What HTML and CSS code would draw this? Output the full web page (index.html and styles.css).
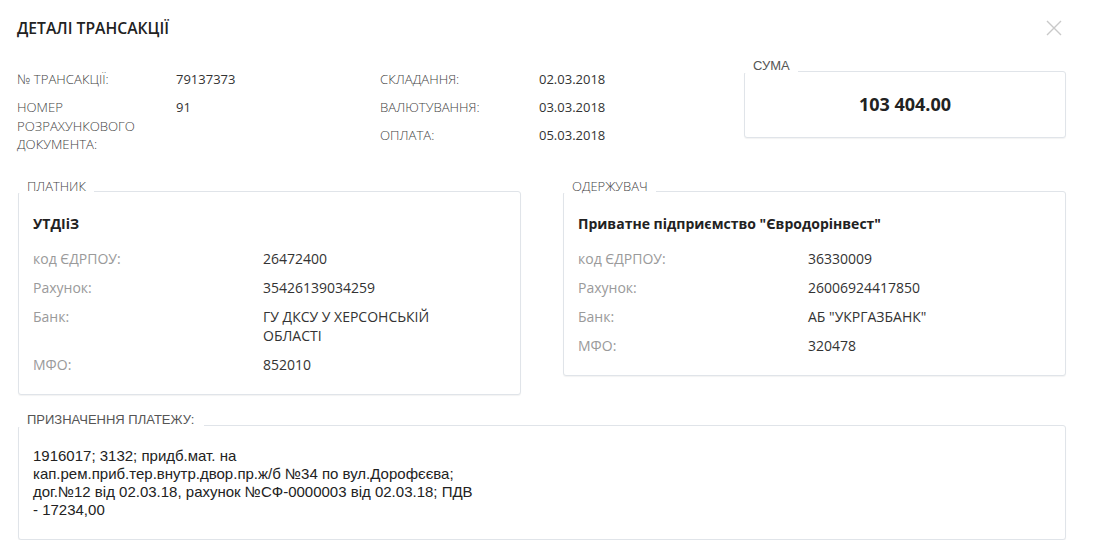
FILE: index.html
```html
<!DOCTYPE html>
<html lang="uk">
<head>
<meta charset="utf-8">
<title>Деталі трансакції</title>
<link rel="stylesheet" href="styles.css">
</head>
<body>
<div class="page">
  <header class="header">
    <h1 class="title">ДЕТАЛІ ТРАНСАКЦІЇ</h1>
    <button class="close" aria-label="Закрити">
      <svg width="16" height="16" viewBox="0 0 16 16"><path d="M1 1 L15 15 M15 1 L1 15" stroke="#c9c9c9" stroke-width="1.4" fill="none"/></svg>
    </button>
  </header>

  <section class="top">
    <div class="info">
      <div class="lbl">№ ТРАНСАКЦІЇ:</div><div class="val">79137373</div>
      <div class="lbl">НОМЕР<br>РОЗРАХУНКОВОГО<br>ДОКУМЕНТА:</div><div class="val">91</div>
    </div>
    <div class="info">
      <div class="lbl">СКЛАДАННЯ:</div><div class="val">02.03.2018</div>
      <div class="lbl">ВАЛЮТУВАННЯ:</div><div class="val">03.03.2018</div>
      <div class="lbl">ОПЛАТА:</div><div class="val">05.03.2018</div>
    </div>
    <div class="fs">
      <div class="legend legend-arial">СУМА</div>
      <div class="box sum-box">103 404.00</div>
    </div>
  </section>

  <section class="parties">
    <div class="fs">
      <div class="legend">ПЛАТНИК</div>
      <div class="box party">
        <div class="party-name">УТДІіЗ</div>
        <div class="rows">
          <div class="plbl">код ЄДРПОУ:</div><div class="pval">26472400</div>
          <div class="plbl">Рахунок:</div><div class="pval">35426139034259</div>
          <div class="plbl">Банк:</div><div class="pval">ГУ ДКСУ У ХЕРСОНСЬКІЙ ОБЛАСТІ</div>
          <div class="plbl">МФО:</div><div class="pval">852010</div>
        </div>
      </div>
    </div>
    <div class="fs">
      <div class="legend">ОДЕРЖУВАЧ</div>
      <div class="box party">
        <div class="party-name">Приватне підприємство "Євродорінвест"</div>
        <div class="rows">
          <div class="plbl">код ЄДРПОУ:</div><div class="pval">36330009</div>
          <div class="plbl">Рахунок:</div><div class="pval">26006924417850</div>
          <div class="plbl">Банк:</div><div class="pval">АБ "УКРГАЗБАНК"</div>
          <div class="plbl">МФО:</div><div class="pval">320478</div>
        </div>
      </div>
    </div>
  </section>

  <section class="fs purpose">
    <div class="legend legend-arial legend-wide">ПРИЗНАЧЕННЯ ПЛАТЕЖУ:</div>
    <div class="box purpose-box">
      <p class="purpose-text">1916017; 3132; придб.мат. на<br>кап.рем.приб.тер.внутр.двор.пр.ж/б №34 по вул.Дорофєєва;<br>дог.№12 від 02.03.18, рахунок №СФ-0000003 від 02.03.18; ПДВ<br>- 17234,00</p>
    </div>
  </section>
</div>
</body>
</html>
```

FILE: styles.css
```css
* { box-sizing: border-box; }
html, body { margin: 0; padding: 0; background: #fff; }
body {
  font-family: "Open Sans", "Noto Sans", sans-serif;
  color: #333;
}
.page {
  padding: 17px 27px 0 17px;
}
.header {
  display: flex;
  justify-content: space-between;
  align-items: center;
  height: 22px;
}
.title {
  margin: 0;
  font-size: 15.7px;
  line-height: 22px;
  font-weight: 600;
  color: #222;
}
.close {
  border: 0;
  background: none;
  padding: 0;
  margin: 0 4px 0 0;
  width: 16px;
  height: 16px;
  display: flex;
}

.top {
  display: grid;
  grid-template-columns: 363px 364px 1fr;
  margin-top: 20px;
}
.info {
  display: grid;
  grid-template-columns: 159px 1fr;
  row-gap: 9px;
  align-content: start;
  padding-top: 11px;
  line-height: 19px;
}
.lbl {
  font-size: 13.2px;
  line-height: 18.5px;
  font-weight: 300;
  color: #444;
}
.val {
  font-size: 13px;
  color: #333;
}

.fs { display: flex; flex-direction: column; align-items: flex-start; }
.legend {
  position: relative;
  z-index: 1;
  background: #fff;
  padding: 0 8px 0 9px;
  font-size: 13px;
  font-weight: 300;
  line-height: 14px;
  color: #444;
}
.legend-arial {
  font-family: "Liberation Sans", Arial, sans-serif;
  font-weight: 400;
  font-size: 13px;
  color: #555;
}
.legend-wide { padding-right: 10px; }
.box {
  align-self: stretch;
  margin-top: -2px;
  border: 1px solid #e0e4e9;
  border-radius: 3px;
  box-shadow: 0 1px 1px rgba(0, 0, 0, 0.05);
  background: #fff;
}
.sum-box {
  height: 67px;
  line-height: 65px;
  text-align: center;
  font-size: 18px;
  font-weight: 700;
  color: #222;
}

.parties {
  display: grid;
  grid-template-columns: 503px 503px;
  justify-content: space-between;
  align-items: start;
  margin: 25px 0 0 1px;
}
.party {
  padding: 22px 14px 20px 14px;
}
.party-name {
  font-size: 14px;
  font-weight: 700;
  line-height: 19px;
  color: #222;
}
.rows {
  display: grid;
  grid-template-columns: 230px 200px;
  row-gap: 10px;
  margin-top: 16px;
  font-size: 14px;
  line-height: 19px;
}
.plbl { color: #9a9a9a; }
.pval { color: #333; }

.purpose {
  margin: 18px 0 0 1px;
}
.purpose-box {
  padding: 21px 14px 20px 14px;
}
.purpose-text {
  margin: 0;
  font-family: "Liberation Sans", Arial, sans-serif;
  font-size: 15px;
  line-height: 18px;
  color: #222;
}
```
